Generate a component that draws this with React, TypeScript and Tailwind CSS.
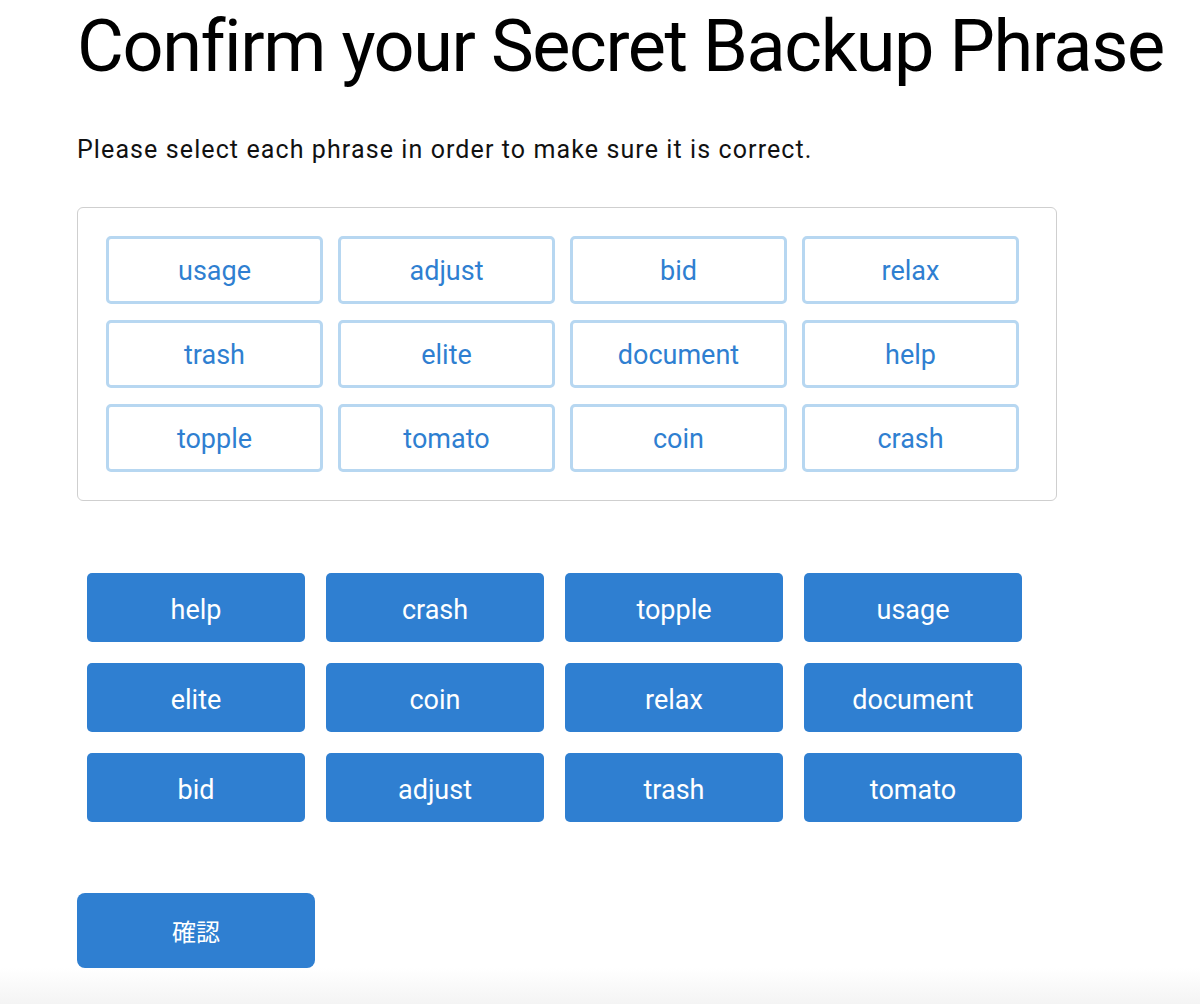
const pickedWords = [
  "usage", "adjust", "bid", "relax",
  "trash", "elite", "document", "help",
  "topple", "tomato", "coin", "crash",
];

const shuffledWords = [
  "help", "crash", "topple", "usage",
  "elite", "coin", "relax", "document",
  "bid", "adjust", "trash", "tomato",
];

export default function App() {
  return (
    <div className="flex min-h-screen flex-col bg-white font-['Roboto','Noto_Sans_CJK_JP',sans-serif] text-black">
      <main className="flex flex-col items-start pl-[77px] pt-[11px]">
        <h1 className="whitespace-nowrap text-[72px] leading-[72px] font-normal tracking-[-1.4px]">
          Confirm your Secret Backup Phrase
        </h1>

        <p className="mt-[54px] whitespace-nowrap text-[25px] leading-[25px] tracking-[1.1px] text-[#111]">
          Please select each phrase in order to make sure it is correct.
        </p>

        <div className="mt-[45px] w-[980px] rounded-md border border-[#cfcfcf] p-[28px]">
          <div className="grid grid-cols-[repeat(4,217px)] gap-x-[15px] gap-y-[16px]">
            {pickedWords.map((word) => (
              <div
                key={word}
                className="flex h-[68px] items-center justify-center rounded-[5px] border-[3px] border-[#b7d7f1] pt-[3px] text-[27px] text-[#2f7fd1]"
              >
                {word}
              </div>
            ))}
          </div>
        </div>

        <div className="ml-[10px] mt-[72px] grid grid-cols-[repeat(4,218px)] gap-x-[21px] gap-y-[21px]">
          {shuffledWords.map((word) => (
            <button
              key={word}
              className="flex h-[69px] items-center justify-center rounded-[5px] bg-[#2f7fd1] pt-[5px] text-[27px] text-white"
            >
              {word}
            </button>
          ))}
        </div>

        <button className="mt-[71px] flex h-[75px] w-[238px] items-center justify-center rounded-[8px] bg-[#2f7fd1] pt-[5px] text-[24px] text-white">
          確認
        </button>
      </main>

      <div className="mt-auto h-[36px] bg-gradient-to-b from-white to-[#f4f4f4]" />
    </div>
  );
}
